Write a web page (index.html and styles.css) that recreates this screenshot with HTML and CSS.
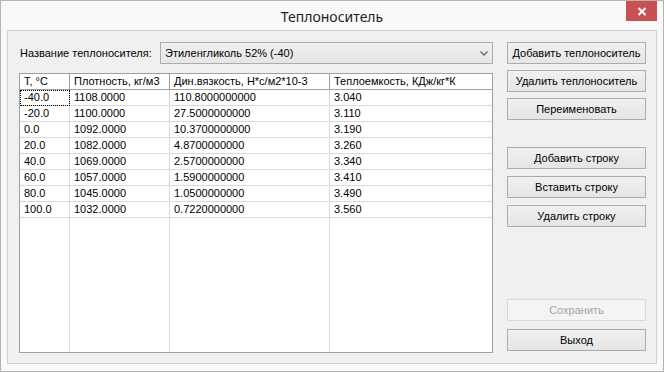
FILE: index.html
```html
<!DOCTYPE html>
<html lang="ru">
<head>
    <meta charset="UTF-8">
    <title>Теплоноситель</title>
    <link rel="stylesheet" href="styles.css">
</head>
<body>
    <div class="window">
        <div class="titlebar">
            <span class="title">Теплоноситель</span>
            <button class="close" title="Закрыть">
                <svg width="10" height="9" viewBox="0 0 10 9">
                    <path d="M1.5 1 L8.5 8 M8.5 1 L1.5 8" stroke="#fff" stroke-width="2"/>
                </svg>
            </button>
        </div>

        <div class="client">
            <div class="main">
                <div class="name-row">
                    <label class="name-label">Название теплоносителя:</label>
                    <div class="combo">
                        <span>Этиленгликоль 52% (-40)</span>
                        <svg width="8" height="5" viewBox="0 0 8 5">
                            <path d="M0.5 0.5 L4 4 L7.5 0.5" stroke="#707070" stroke-width="1.5" fill="none"/>
                        </svg>
                    </div>
                </div>

                <div class="grid">
                    <table>
                        <thead>
                            <tr>
                                <th class="c1">T, °C</th>
                                <th class="c2">Плотность, кг/м3</th>
                                <th class="c3">Дин.вязкость, Н*с/м2*10-3</th>
                                <th class="c4">Теплоемкость, КДж/кг*К</th>
                            </tr>
                        </thead>
                        <tbody>
                            <tr><td class="focus">-40.0</td><td>1108.0000</td><td>110.8000000000</td><td>3.040</td></tr>
                            <tr><td>-20.0</td><td>1100.0000</td><td>27.5000000000</td><td>3.110</td></tr>
                            <tr><td>0.0</td><td>1092.0000</td><td>10.3700000000</td><td>3.190</td></tr>
                            <tr><td>20.0</td><td>1082.0000</td><td>4.8700000000</td><td>3.260</td></tr>
                            <tr><td>40.0</td><td>1069.0000</td><td>2.5700000000</td><td>3.340</td></tr>
                            <tr><td>60.0</td><td>1057.0000</td><td>1.5900000000</td><td>3.410</td></tr>
                            <tr><td>80.0</td><td>1045.0000</td><td>1.0500000000</td><td>3.490</td></tr>
                            <tr><td>100.0</td><td>1032.0000</td><td>0.7220000000</td><td>3.560</td></tr>
                            <tr class="filler"><td></td><td></td><td></td><td></td></tr>
                        </tbody>
                    </table>
                </div>
            </div>

            <div class="side">
                <button class="btn">Добавить теплоноситель</button>
                <button class="btn">Удалить теплоноситель</button>
                <button class="btn">Переименовать</button>

                <div class="group">
                    <button class="btn">Добавить строку</button>
                    <button class="btn">Вставить строку</button>
                    <button class="btn">Удалить строку</button>
                </div>

                <div class="bottom">
                    <button class="btn" disabled>Сохранить</button>
                    <button class="btn">Выход</button>
                </div>
            </div>
        </div>
    </div>
</body>
</html>
```

FILE: styles.css
```css
* {
    margin: 0;
    padding: 0;
    box-sizing: border-box;
}

body {
    width: 664px;
    height: 372px;
    background: #fafafa;
    font-family: "Liberation Sans", Arial, sans-serif;
    font-size: 11px;
    color: #000;
}

.window {
    width: 664px;
    height: 372px;
    border: 1px solid #b4b4b4;
    background: #f9f9f9;
    display: flex;
    flex-direction: column;
    padding: 0 6px 7px;
}

/* заголовок окна */
.titlebar {
    height: 29px;
    display: grid;
    grid-template-columns: 1fr auto 1fr;
    align-items: center;
}

.title {
    grid-column: 2;
    font-family: "Noto Sans", "Open Sans", sans-serif;
    font-size: 14px;
    color: #1e1e1e;
    padding-top: 1px;
}

.close {
    grid-column: 3;
    justify-self: end;
    align-self: start;
    width: 31px;
    height: 20px;
    margin-right: 0;
    border: none;
    background: #c75050;
    display: flex;
    align-items: center;
    justify-content: center;
}

/* клиентская часть */
.client {
    height: 334px;
    border: 1px solid #cfcfcf;
    background: #f0f0f0;
    display: flex;
    gap: 14px;
    padding: 11px 10px 10px 11px;
}

.main {
    width: 474px;
    display: flex;
    flex-direction: column;
    gap: 9px;
}

.name-row {
    display: flex;
    align-items: center;
    height: 22px;
}

.name-label {
    margin-left: 1px;
    width: 140px;
}

.combo {
    flex: 1;
    height: 22px;
    border: 1px solid #acacac;
    background: linear-gradient(#f0f0f0, #e5e5e5);
    display: flex;
    align-items: center;
    justify-content: space-between;
    padding: 0 4px 0 4px;
}

/* таблица */
.grid {
    height: 280px;
    border: 1px solid #a0a0a0;
    background: #fff;
}

.grid table {
    width: 100%;
    height: 100%;
    border-collapse: separate;
    border-spacing: 0;
    table-layout: fixed;
}

.grid th,
.grid td {
    height: 16px;
    padding: 0 0 0 4px;
    text-align: left;
    font-weight: normal;
    line-height: 15px;
    white-space: nowrap;
    overflow: hidden;
    vertical-align: middle;
}

.grid th {
    border-right: 1px solid #a0a0a0;
    border-bottom: 1px solid #a0a0a0;
}

.grid td {
    border-right: 1px solid #dadada;
    border-bottom: 1px solid #dadada;
}

.grid th:last-child,
.grid td:last-child {
    border-right: none;
}

.grid .c1 { width: 50px; }
.grid .c2 { width: 100px; }
.grid .c3 { width: 160px; }

.grid td.focus {
    outline: 1px dotted #000;
    outline-offset: -1px;
}

.grid .filler td {
    height: auto;
    border-bottom: none;
}

/* кнопки справа */
.side {
    width: 139px;
    display: flex;
    flex-direction: column;
    gap: 6px;
}

.group {
    margin-top: 21px;
    display: flex;
    flex-direction: column;
    gap: 7px;
}

.bottom {
    margin-top: auto;
    display: flex;
    flex-direction: column;
    gap: 8px;
    padding-bottom: 2px;
}

.btn {
    height: 22px;
    border: 1px solid #acacac;
    background: linear-gradient(#f0f0f0, #e5e5e5);
    font-family: "Liberation Sans", Arial, sans-serif;
    font-size: 11px;
    color: #000;
}

.btn:disabled {
    border-color: #d9d9d9;
    background: #f4f4f4;
    color: #a3a3a3;
}
```
